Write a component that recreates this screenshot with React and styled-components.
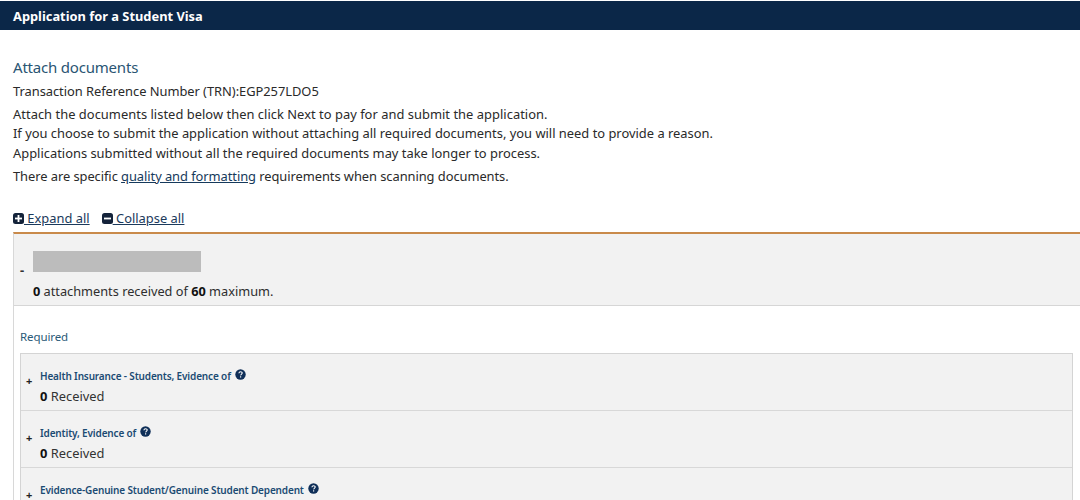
import React from "react";
import styled, { createGlobalStyle } from "styled-components";

const Global = createGlobalStyle`
  html, body { margin: 0; padding: 0; background: #fff; overflow: hidden; }
  body { font-family: "Noto Sans", "Open Sans", sans-serif; color: #222; }
`;
const Page = styled.div`width: 1080px; height: 500px; overflow: hidden; background: #fff;`;
const TitleBar = styled.header`
  margin-top: 1px; height: 29px; background: #0b2748; color: #fff;
  display: flex; align-items: center; padding: 0 13px;
  font-size: 12.85px; font-weight: 700;
`;
const Intro = styled.section`padding: 27px 13px 0;`;
const Heading = styled.h2`
  margin: 0 0 5px; font-size: 15px; line-height: 20px; font-weight: 400; color: #2a5573; letter-spacing: -0.2px;
`;
const Line = styled.p`
  margin: ${p => p.$top || 0}px 0 0; font-size: 12.9px; line-height: 19.5px; color: #2a2a2a;
  letter-spacing: ${p => p.$track || 0}px;
`;
const TextLink = styled.a`color: #163a5c; text-decoration: underline;`;
const Tools = styled.div`
  display: flex; gap: 12px; padding: 21px 13px 0; height: 21px; align-items: center; font-size: 12.9px;
`;
const Tool = styled.a`
  display: inline-flex; align-items: center; color: #1b3a5c; text-decoration: underline;
  white-space: pre;
  svg { flex: none; }
`;
const Panel = styled.section`
  margin: 3px 0 0 13px; border-top: 2px solid #c98a4b; border-left: 1px solid #d8d8d8;
`;
const PanelHead = styled.div`
  height: 71px; background: #f2f2f2; border-bottom: 1px solid #d6d6d6;
  display: grid; grid-template-columns: 19px 1fr;
`;
const Minus = styled.span`
  font-size: 13px; font-weight: 700; color: #333; padding: 26px 0 0 6px; line-height: 20px;
`;
const HeadBody = styled.div`padding: 17px 0 0 0;`;
const Redacted = styled.div`width: 168px; height: 21px; background: #bcbcbc;`;
const Count = styled.div`margin-top: 10px; font-size: 12.75px; line-height: 18px; color: #2e2e2e; b { color: #111; }`;
const Body = styled.div`padding: 23px 7px 0 6px;`;
const Required = styled.div`font-size: 11.5px; line-height: 16px; color: #2a5a78; letter-spacing: -0.1px;`;
const List = styled.div`margin-top: 8px; border: 1px solid #d4d4d4; border-bottom: 0;`;
const Item = styled.div`
  height: 56px; background: #f2f2f2; border-bottom: 1px solid #d8d8d8;
  display: grid; grid-template-columns: 19px 1fr;
`;
const Plus = styled.span`
  font-size: 11px; font-weight: 700; color: #222; padding: 19px 0 0 5px; line-height: 16px;
`;
const ItemBody = styled.div`padding: 14px 0 0 0;`;
const ItemTitle = styled.div`
  display: flex; align-items: center; gap: 4px; font-size: 10px; line-height: 17px; font-weight: 600; color: #1b4b73;
  letter-spacing: -0.15px;
  svg { margin-top: -3px; }
`;
const Received = styled.div`margin-top: 2px; font-size: 12.9px; line-height: 18px; color: #333; b { color: #111; }`;

const Help = () => (
  <svg width="11" height="11" viewBox="0 0 11 11" aria-hidden="true">
    <circle cx="5.5" cy="5.5" r="5.2" fill="#0f2f58" />
    <path d="M3.9 4.2c.1-.9.8-1.4 1.7-1.4s1.6.5 1.6 1.3c0 1.2-1.5 1.2-1.6 2.3" fill="none" stroke="#fff" strokeWidth="1.1" />
    <rect x="5" y="7.3" width="1.2" height="1.2" fill="#fff" />
  </svg>
);
const SquareIcon = ({ plus }) => (
  <svg width="11" height="11" viewBox="0 0 11 11" aria-hidden="true">
    <rect width="11" height="11" rx="2.5" fill="#14233a" />
    <rect x="2" y="4.6" width="7" height="1.8" fill="#fff" />
    {plus && <rect x="4.6" y="2" width="1.8" height="7" fill="#fff" />}
  </svg>
);
const items = [
  "Health Insurance - Students, Evidence of",
  "Identity, Evidence of",
  "Evidence-Genuine Student/Genuine Student Dependent",
];

export default function App() {
  return (
    <Page>
      <Global />
      <TitleBar>Application for a Student Visa</TitleBar>
      <Intro>
        <Heading>Attach documents</Heading>
        <Line $track={-0.04}>Transaction Reference Number (TRN):EGP257LDO5</Line>
        <Line $top={3} $track={0.03}>Attach the documents listed below then click Next to pay for and submit the application.</Line>
        <Line>If you choose to submit the application without attaching all required documents, you will need to provide a reason.</Line>
        <Line>Applications submitted without all the required documents may take longer to process.</Line>
        <Line $top={4} $track={-0.06}>There are specific <TextLink>quality and formatting</TextLink> requirements when scanning documents.</Line>
      </Intro>
      <Tools>
        <Tool><SquareIcon plus /> Expand all</Tool>
        <Tool><SquareIcon /> Collapse all</Tool>
      </Tools>
      <Panel>
        <PanelHead>
          <Minus>-</Minus>
          <HeadBody>
            <Redacted />
            <Count><b>0</b> attachments received of <b>60</b> maximum.</Count>
          </HeadBody>
        </PanelHead>
        <Body>
          <Required>Required</Required>
          <List>
            {items.map(t => (
              <Item key={t}>
                <Plus>+</Plus>
                <ItemBody>
                  <ItemTitle>{t} <Help /></ItemTitle>
                  <Received><b>0</b> Received</Received>
                </ItemBody>
              </Item>
            ))}
          </List>
        </Body>
      </Panel>
    </Page>
  );
}
